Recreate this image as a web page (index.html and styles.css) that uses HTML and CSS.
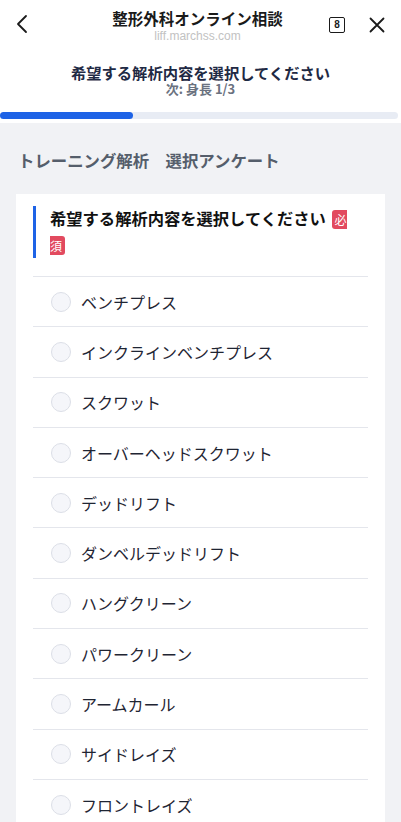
FILE: index.html
```html
<!DOCTYPE html>
<html lang="ja">
<head>
  <meta charset="UTF-8" />
  <meta name="viewport" content="width=device-width, initial-scale=1.0"/>
  <title>整形外科オンライン相談</title>
  <link rel="stylesheet" href="styles.css">
</head>
<body>
  <!-- LIFF のヘッダー -->
  <header class="topbar">
    <button class="icon-btn back" aria-label="戻る">
      <svg width="12" height="20" viewBox="0 0 12 20"><path d="M10 2 L2 10 L10 18" fill="none" stroke="#1a1a1a" stroke-width="1.8" stroke-linecap="round" stroke-linejoin="round"/></svg>
    </button>
    <div class="topbar-title">
      <div class="app-name">整形外科オンライン相談</div>
      <div class="app-url">liff.marchss.com</div>
    </div>
    <div class="topbar-actions">
      <span class="tab-count">8</span>
      <button class="icon-btn close" aria-label="閉じる">
        <svg width="16" height="16" viewBox="0 0 16 16"><path d="M1.5 1.5 L14.5 14.5 M14.5 1.5 L1.5 14.5" fill="none" stroke="#1a1a1a" stroke-width="1.8" stroke-linecap="round"/></svg>
      </button>
    </div>
  </header>

  <div class="step">
    <div class="step-title">希望する解析内容を選択してください</div>
    <div class="step-next">次: 身長 1/3</div>
    <div class="progress"><div class="progress-bar" style="width: 33.3%"></div></div>
  </div>

  <main class="content">
    <h2 class="section-title">トレーニング解析　選択アンケート</h2>
    <div class="card">
      <div class="question">希望する解析内容を選択してください <span class="required">必須</span></div>
      <ul class="options">
        <li><span class="radio"></span>ベンチプレス</li>
        <li><span class="radio"></span>インクラインベンチプレス</li>
        <li><span class="radio"></span>スクワット</li>
        <li><span class="radio"></span>オーバーヘッドスクワット</li>
        <li><span class="radio"></span>デッドリフト</li>
        <li><span class="radio"></span>ダンベルデッドリフト</li>
        <li><span class="radio"></span>ハングクリーン</li>
        <li><span class="radio"></span>パワークリーン</li>
        <li><span class="radio"></span>アームカール</li>
        <li><span class="radio"></span>サイドレイズ</li>
        <li><span class="radio"></span>フロントレイズ</li>
      </ul>
    </div>
  </main>
</body>
</html>
```

FILE: styles.css
```css
body {
  margin: 0;
  padding: 0;
  background-color: #f1f2f5;
  font-family: "Noto Sans CJK JP", "Noto Sans", sans-serif;
  color: #1f2533;
}
button {
  border: none;
  background: none;
  padding: 0;
  cursor: pointer;
}
/* ヘッダー */
.topbar {
  display: flex;
  align-items: flex-start;
  height: 48px;
  padding: 0 16px;
  background-color: #fff;
}
.icon-btn {
  display: flex;
  align-items: center;
  justify-content: center;
}
.back {
  margin-top: 14px;
  width: 12px;
}
.topbar-title {
  flex: 1;
  text-align: center;
  padding-top: 8px;
  margin-left: 38px;
}
.app-name {
  font-size: 15.5px;
  font-weight: bold;
  line-height: 20px;
  color: #1a1a1a;
}
.app-url {
  font-family: "Liberation Sans", sans-serif;
  font-size: 12px;
  line-height: 16px;
  color: #c2c2c2;
}
.topbar-actions {
  display: flex;
  align-items: center;
  gap: 24px;
  margin-top: 17px;
}
.tab-count {
  width: 14px;
  height: 14px;
  border: 1.6px solid #1a1a1a;
  border-radius: 2px;
  font-family: "Liberation Sans", sans-serif;
  font-size: 10px;
  font-weight: bold;
  line-height: 14px;
  text-align: center;
  color: #1a1a1a;
}
.close {
  width: 16px;
  height: 16px;
}
/* ステップ表示 */
.step {
  background-color: #fff;
  text-align: center;
  padding-top: 15px;
  padding-bottom: 4px;
}
.step-title {
  font-size: 15.3px;
  font-weight: bold;
  line-height: 18px;
  color: #1f2a44;
}
.step-next {
  font-size: 13px;
  font-weight: bold;
  line-height: 16px;
  color: #6b7280;
}
.progress {
  margin: 15px 3px 0 0;
  height: 7px;
  border-radius: 4px;
  background-color: #e8ecf4;
}
.progress-bar {
  height: 100%;
  border-radius: 4px;
  background-color: #1e63e6;
}
/* コンテンツ */
.content {
  padding: 26px 16px 0;
}
.section-title {
  margin: 0 0 23px 2px;
  font-size: 16.4px;
  font-weight: bold;
  line-height: 22px;
  color: #555e6b;
}
.card {
  background-color: #fff;
  padding: 12px 17px 40px;
}
.question {
  border-left: 3.5px solid #1e63e6;
  padding: 0 12px 0 14px;
  margin-bottom: 18px;
  font-size: 16.3px;
  font-weight: bold;
  line-height: 25px;
  color: #111;
}
.required {
  margin-left: 2px;
  background-color: #e24a5f;
  color: #fff;
  font-size: 12px;
  font-weight: normal;
  padding: 1px 3px;
  border-radius: 3px;
}
.options {
  list-style: none;
  margin: 0;
  padding: 0;
}
.options li {
  display: flex;
  align-items: center;
  gap: 10px;
  height: 49.3px;
  padding-left: 18px;
  border-top: 1px solid #e4e6ec;
  font-size: 16px;
  color: #1f2533;
}
.radio {
  width: 18px;
  height: 18px;
  border: 1px solid #dcdfe7;
  border-radius: 50%;
  background-color: #f5f6fa;
}
```
